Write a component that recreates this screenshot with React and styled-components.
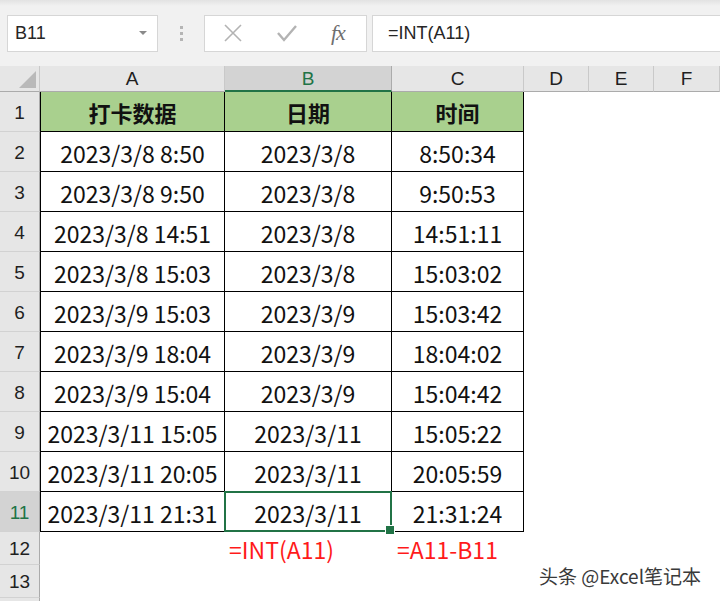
import React from 'react'
import styled, { createGlobalStyle } from 'styled-components'

const GlobalStyle = createGlobalStyle`
    html, body {
        margin: 0;
        padding: 0;
        width: 720px;
        height: 601px;
        overflow: hidden;
        background: #ffffff;
    }
    * {
        box-sizing: border-box;
    }
`

const GREEN = '#217346'
const CJK = `"Noto Sans CJK SC", "Noto Sans", sans-serif`
const UI = `"Liberation Sans", Arial, sans-serif`

const Page = styled.div`
    width: 720px;
    height: 601px;
    display: flex;
    flex-direction: column;
    overflow: hidden;
    position: relative;
`

const Toolbar = styled.div`
    height: 66px;
    flex: none;
    display: flex;
    align-items: center;
    padding: 0 0 0 7px;
    background: linear-gradient(#e2e2e2 0px, #f1f1f1 6px, #f1f1f1 100%);
`

const NameBox = styled.div`
    width: 151px;
    height: 37px;
    background: #fff;
    border: 1px solid #d6d6d6;
    display: flex;
    align-items: center;
    justify-content: space-between;
    padding: 0 10px 0 7px;
    font-family: ${UI};
    font-size: 18px;
    color: #262626;
`

const Caret = styled.span`
    width: 0;
    height: 0;
    border-left: 4px solid transparent;
    border-right: 4px solid transparent;
    border-top: 4px solid #8a8a8a;
`

const Dots = styled.div`
    width: 46px;
    display: flex;
    flex-direction: column;
    align-items: center;
    gap: 3px;

    span {
        width: 3px;
        height: 3px;
        background: #b5b5b5;
    }
`

const FxBox = styled.div`
    width: 163px;
    height: 37px;
    background: #fff;
    border: 1px solid #d6d6d6;
    display: flex;
    align-items: center;
    padding: 0 0 0 18px;
    gap: 33px;
`

const Fx = styled.span`
    font-family: "Liberation Serif", "DejaVu Serif", serif;
    font-style: italic;
    font-size: 22px;
    color: #6f6f6f;
    letter-spacing: -1px;
`

const FormulaBox = styled.div`
    flex: 1;
    margin-left: 5px;
    height: 37px;
    background: #fff;
    border: 1px solid #d6d6d6;
    border-right: none;
    display: flex;
    align-items: center;
    padding-left: 15px;
    font-family: ${UI};
    font-size: 18px;
    color: #262626;
`

const Sheet = styled.div`
    display: grid;
    grid-template-columns: 40px 185px 167px 132px 65px 65px 66px;
    grid-template-rows: 26px repeat(11, 40px) 33px 33px 33px;
    background: #fff;
`

const Corner = styled.div`
    background: #e6e6e6;
    border-right: 1px solid #c9c9c9;
    border-bottom: 1px solid #ababab;
    position: relative;

    &::after {
        content: '';
        position: absolute;
        right: 3px;
        bottom: 3px;
        width: 0;
        height: 0;
        border-left: 17px solid transparent;
        border-bottom: 17px solid #b9b9b9;
    }
`

const ColHead = styled.div`
    background: ${p => (p.$active ? '#d3d3d3' : '#e6e6e6')};
    color: ${p => (p.$active ? GREEN : '#1f1f1f')};
    border-right: 1px solid ${p => (p.$active ? '#ababab' : '#c9c9c9')};
    border-bottom: ${p => (p.$active ? `2px solid ${GREEN}` : '1px solid #ababab')};
    display: flex;
    align-items: center;
    justify-content: center;
    font-family: ${UI};
    font-size: 19px;
    padding-top: 1px;
`

const RowHead = styled.div`
    background: ${p => (p.$active ? '#d3d3d3' : '#e6e6e6')};
    color: ${p => (p.$active ? GREEN : '#1f1f1f')};
    border-right: 1px solid #ababab;
    border-bottom: 1px solid #d2d2d2;
    display: flex;
    align-items: center;
    justify-content: center;
    font-family: ${UI};
    font-size: 19px;
    padding-top: 2px;
`

const Cell = styled.div`
    position: relative;
    display: flex;
    align-items: center;
    justify-content: center;
    font-family: ${CJK};
    font-size: 23px;
    color: #111;
    white-space: nowrap;
    padding-top: 2px;
    background: ${p => (p.$head ? '#a9d08e' : '#fff')};
    font-weight: ${p => (p.$head ? 700 : 400)};
    border-right: 1px solid #000;
    border-bottom: 1px solid #000;
    border-left: ${p => (p.$first ? '1px solid #000' : 'none')};
    ${p => p.$head && 'font-size: 22px; padding-top: 1px;'}
`

const Blank = styled.div`
    background: #fff;
`

const Note = styled.div`
    display: flex;
    align-items: center;
    padding-left: ${p => p.$pad}px;
    font-family: ${CJK};
    font-size: 23px;
    color: #ff1a1a;
    white-space: nowrap;
`

const Selection = styled.div`
    position: absolute;
    left: -1px;
    top: -1px;
    right: -1px;
    bottom: -1px;
    border: 2px solid ${GREEN};
    pointer-events: none;
    z-index: 2;

    &::after {
        content: '';
        position: absolute;
        right: -5px;
        bottom: -5px;
        width: 8px;
        height: 8px;
        background: ${GREEN};
        border: 1px solid #fff;
    }
`

const Watermark = styled.div`
    position: absolute;
    left: 539px;
    top: 562px;
    font-family: ${CJK};
    font-size: 19px;
    color: #3a3a3a;
    white-space: nowrap;
    text-shadow: 0 0 2px #fff;
`

const data = [
    ['2023/3/8 8:50', '2023/3/8', '8:50:34'],
    ['2023/3/8 9:50', '2023/3/8', '9:50:53'],
    ['2023/3/8 14:51', '2023/3/8', '14:51:11'],
    ['2023/3/8 15:03', '2023/3/8', '15:03:02'],
    ['2023/3/9 15:03', '2023/3/9', '15:03:42'],
    ['2023/3/9 18:04', '2023/3/9', '18:04:02'],
    ['2023/3/9 15:04', '2023/3/9', '15:04:42'],
    ['2023/3/11 15:05', '2023/3/11', '15:05:22'],
    ['2023/3/11 20:05', '2023/3/11', '20:05:59'],
    ['2023/3/11 21:31', '2023/3/11', '21:31:24'],
]

const letters = ['A', 'B', 'C', 'D', 'E', 'F']

const CrossIcon = () => (
    <svg width="20" height="20" viewBox="0 0 20 20">
        <path d="M2 2 L18 18 M18 2 L2 18" stroke="#b3b3b3" strokeWidth="1.6" fill="none" />
    </svg>
)

const CheckIcon = () => (
    <svg width="22" height="20" viewBox="0 0 22 20">
        <path d="M2 10 L8 17 L20 3" stroke="#b3b3b3" strokeWidth="2.4" fill="none" />
    </svg>
)

const App = () => {
    const last = data.length - 1

    return (
        <Page>
            <GlobalStyle />
            <Toolbar>
                <NameBox>
                    B11
                    <Caret />
                </NameBox>
                <Dots>
                    <span />
                    <span />
                    <span />
                </Dots>
                <FxBox>
                    <CrossIcon />
                    <CheckIcon />
                    <Fx>fx</Fx>
                </FxBox>
                <FormulaBox>=INT(A11)</FormulaBox>
            </Toolbar>

            <Sheet>
                <Corner />
                {letters.map(l => (
                    <ColHead key={l} $active={l === 'B'}>{l}</ColHead>
                ))}

                <RowHead>1</RowHead>
                <Cell $head $first>打卡数据</Cell>
                <Cell $head>日期</Cell>
                <Cell $head>时间</Cell>
                <Blank />
                <Blank />
                <Blank />

                {data.map((row, i) => (
                    <React.Fragment key={i}>
                        <RowHead $active={i === last}>{i + 2}</RowHead>
                        <Cell $first>{row[0]}</Cell>
                        <Cell>
                            {row[1]}
                            {i === last && <Selection />}
                        </Cell>
                        <Cell>{row[2]}</Cell>
                        <Blank />
                        <Blank />
                        <Blank />
                    </React.Fragment>
                ))}

                <RowHead>12</RowHead>
                <Blank />
                <Note $pad={4}>=INT(A11)</Note>
                <Note $pad={5}>=A11-B11</Note>
                <Blank />
                <Blank />
                <Blank />

                <RowHead>13</RowHead>
                <Blank />
                <Blank />
                <Blank />
                <Blank />
                <Blank />
                <Blank />

                <RowHead />
            </Sheet>

            <Watermark>头条 @Excel笔记本</Watermark>
        </Page>
    )
}

export default App
